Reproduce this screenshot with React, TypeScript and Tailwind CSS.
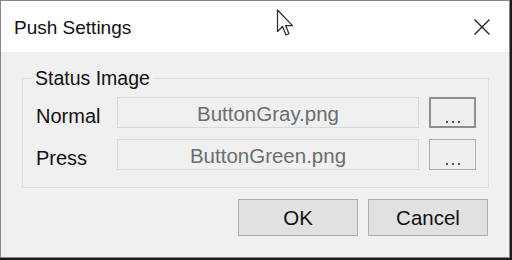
import { useState } from 'react'

const font = { fontFamily: '"Liberation Sans", Arial, sans-serif' }

function CloseIcon() {
  return (
    <svg width="18" height="18" viewBox="0 0 18 18" className="block">
      <path d="M1.5 1.5 L16.5 16.5 M16.5 1.5 L1.5 16.5" stroke="#1b1b1b" strokeWidth="1.3" fill="none" />
    </svg>
  )
}

function Cursor() {
  return (
    <svg width="20" height="28" viewBox="0 0 20 28" className="absolute left-[276px] top-[9px]">
      <path
        d="M1.5 1 L1.5 22.5 L6.5 17.5 L10 26 L13 24.8 L9.6 16.6 L16.5 16.6 Z"
        fill="#ffffff"
        stroke="#2a2a2a"
        strokeWidth="1.2"
        strokeLinejoin="round"
      />
    </svg>
  )
}

function FileRow({ label, file, focused }: { label: string; file: string; focused?: boolean }) {
  return (
    <div className="flex items-center h-[31px]">
      <div className="w-[81px] pt-[6px] text-[20px] text-[#111]">{label}</div>
      <div className="w-[302px] h-[31px] pt-[3px] border border-[#d9d9d9] bg-[#f0f0f0] flex items-center justify-center text-[20.5px] text-[#6d6d6d]">
        {file}
      </div>
      <button
        className={`ml-[10px] w-[47px] h-[31px] bg-[#efefef] flex items-end justify-center ${
          focused ? 'border-2 border-[#8f8f8f] pb-[3px]' : 'border border-[#adadad] pb-[4px]'
        }`}
      >
        <span className="flex gap-[4px]">
          <span className="w-[2px] h-[2px] bg-[#555]" />
          <span className="w-[2px] h-[2px] bg-[#555]" />
          <span className="w-[2px] h-[2px] bg-[#555]" />
        </span>
      </button>
    </div>
  )
}

export default function App() {
  const [open] = useState(true)

  return (
    <div className="w-[512px] h-[260px] bg-[#1c1c1c] relative overflow-hidden" style={font}>
      {open && (
        <div className="w-[510px] h-[258px] border border-[#858585] bg-[#f0f0f0] flex flex-col">
          <div className="h-[51px] bg-white flex items-center justify-between pl-[13px] pr-[18px]">
            <span className="text-[19px] text-[#111] pt-[3px]">Push Settings</span>
            <CloseIcon />
          </div>

          <div className="px-[21px]">
            <fieldset className="mt-[15px] border border-[#dcdcdc] pl-[13px] pr-[12px] pt-[8px] pb-[17px] flex flex-col gap-[11px]">
              <legend className="-ml-[4px] px-[3px] text-[19.5px] leading-[22px] text-[#111]">Status Image</legend>
              <FileRow label="Normal" file="ButtonGray.png" focused />
              <FileRow label="Press" file="ButtonGreen.png" />
            </fieldset>

            <div className="mt-[11px] flex justify-end gap-[10px]">
              <button className="w-[120px] h-[37px] pt-[1px] bg-[#e1e1e1] border border-[#adadad] text-[20.5px] text-[#111]">
                OK
              </button>
              <button className="w-[120px] h-[37px] pt-[1px] bg-[#e1e1e1] border border-[#adadad] text-[20.5px] text-[#111]">
                Cancel
              </button>
            </div>
          </div>
        </div>
      )}
      <Cursor />
    </div>
  )
}
